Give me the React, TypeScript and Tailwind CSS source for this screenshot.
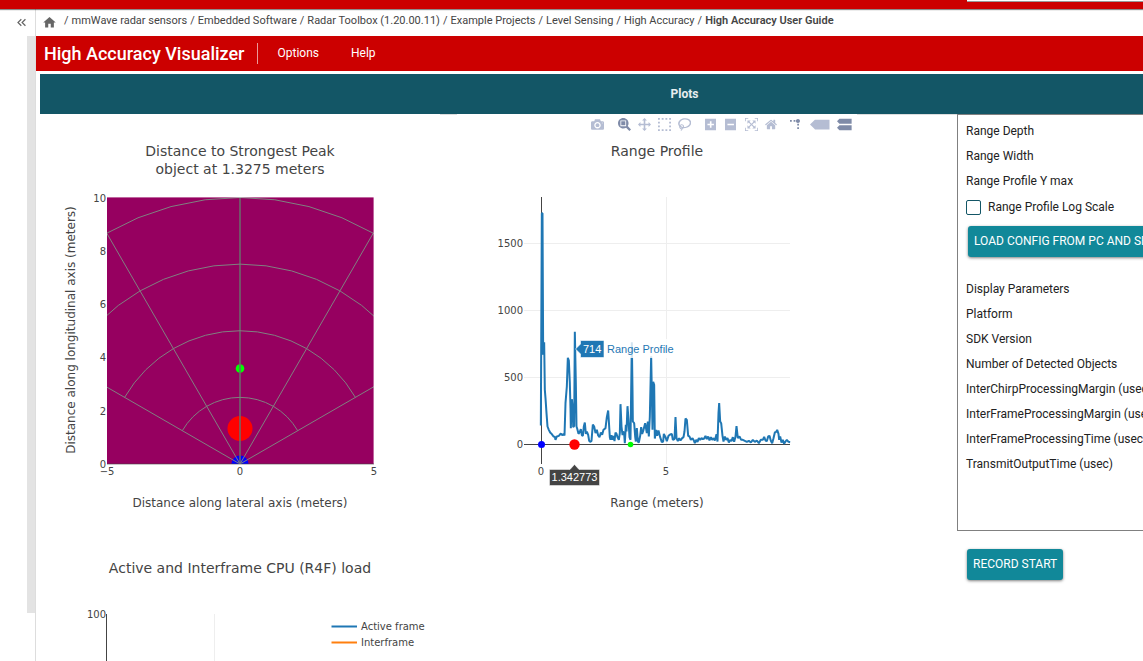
import React from "react";
import { MdHome, MdKeyboardDoubleArrowLeft } from "react-icons/md";

type Point = [number, number];

const PLOT_FONT = "Verdana, 'DejaVu Sans', sans-serif";
const HOVER_FONT = "Arial, 'Liberation Sans', sans-serif";
const INK = "#444";

const trail = [
  "mmWave radar sensors",
  "Embedded Software",
  "Radar Toolbox (1.20.00.11)",
  "Example Projects",
  "Level Sensing",
  "High Accuracy",
];

const rangeSettings = ["Range Depth", "Range Width", "Range Profile Y max"];

const displayParameters = [
  "Display Parameters",
  "Platform",
  "SDK Version",
  "Number of Detected Objects",
  "InterChirpProcessingMargin (usec)",
  "InterFrameProcessingMargin (usec)",
  "InterFrameProcessingTime (usec)",
  "TransmitOutputTime (usec)",
];

type Tool = { name: string; width: number; d: string; active?: boolean; transform?: string };

const toolGroups: Tool[][] = [
  [
    {
      name: "Download plot as a png",
      width: 1000,
      d: "m500 450c-83 0-150-67-150-150 0-83 67-150 150-150 83 0 150 67 150 150 0 83-67 150-150 150z m400 150h-120c-16 0-34 13-39 29l-31 93c-6 15-23 28-40 28h-340c-16 0-34-13-39-28l-31-94c-6-15-23-28-40-28h-120c-55 0-100-45-100-100v-450c0-55 45-100 100-100h800c55 0 100 45 100 100v450c0 55-45 100-100 100z m-400-550c-138 0-250 112-250 250 0 138 112 250 250 250 138 0 250-112 250-250 0-138-112-250-250-250z m365 380c-19 0-35 16-35 35 0 19 16 35 35 35 19 0 35-16 35-35 0-19-16-35-35-35z",
    },
  ],
  [
    {
      name: "Zoom",
      width: 1000,
      active: true,
      d: "m1000-25l-250 251c40 63 63 138 63 218 0 224-182 406-407 406-224 0-406-182-406-406s183-406 407-406c80 0 155 22 218 62l250-250 125 125z m-812 250l0 438 437 0 0-438-437 0z m62 375l313 0 0-312-313 0 0 312z",
    },
    {
      name: "Pan",
      width: 1000,
      d: "m1000 350l-187 188 0-125-250 0 0 250 125 0-188 187-187-187 125 0 0-250-250 0 0 125-188-188 186-187 0 125 252 0 0-250-125 0 187-188 188 188-125 0 0 250 250 0 0-126 187 188z",
    },
    {
      name: "Box Select",
      width: 1000,
      d: "m0 850l0-143 143 0 0 143-143 0z m286 0l0-143 143 0 0 143-143 0z m285 0l0-143 143 0 0 143-143 0z m286 0l0-143 143 0 0 143-143 0z m-857-286l0-143 143 0 0 143-143 0z m857 0l0-143 143 0 0 143-143 0z m-857-285l0-143 143 0 0 143-143 0z m857 0l0-143 143 0 0 143-143 0z m-857-286l0-143 143 0 0 143-143 0z m286 0l0-143 143 0 0 143-143 0z m285 0l0-143 143 0 0 143-143 0z m286 0l0-143 143 0 0 143-143 0z",
    },
    {
      name: "Lasso Select",
      width: 1031,
      d: "m1018 538c-36 207-290 336-568 286-277-48-473-256-436-463 10-57 36-108 76-151-13-66 11-137 68-183 34-28 75-41 114-42l-55-70 0 0c-2-1-3-2-4-3-10-14-8-34 5-45 14-11 34-8 45 4 1 1 2 3 2 5l0 0 113 140c16 11 31 24 45 40 4 3 6 7 8 11 48-3 100 0 151 9 278 48 473 255 436 462z m-624-379c-80 14-149 48-197 96 42 42 109 47 156 9 33-26 47-66 41-105z m-187-74c-19 16-33 37-39 60 50-32 109-55 174-68-42-25-95-24-135 8z m360 75c-34-7-69-9-102-8 8 62-16 128-68 170-73 59-175 54-244-5-9 20-16 40-20 61-28 159 121 317 333 354s407-60 434-217c28-159-121-318-333-355z",
    },
  ],
  [
    {
      name: "Zoom in",
      width: 875,
      d: "m1 787l0-875 875 0 0 875-875 0z m687-500l-187 0 0-187-125 0 0 187-188 0 0 125 188 0 0 187 125 0 0-187 187 0 0-125z",
    },
    {
      name: "Zoom out",
      width: 875,
      d: "m0 788l0-876 875 0 0 876-875 0z m688-500l-500 0 0 125 500 0 0-125z",
    },
    {
      name: "Autoscale",
      width: 1000,
      d: "m250 850l-187 0-63 0 0-62 0-188 63 0 0 188 187 0 0 62z m688 0l-188 0 0-62 188 0 0-188 62 0 0 188 0 62-62 0z m-875-938l0 188-63 0 0-188 0-62 63 0 187 0 0 62-187 0z m875 188l0-188-188 0 0-62 188 0 62 0 0 62 0 188-62 0z m-125 188l-1 0-93-94-156 156 156 156 92-93 2 0 0 250-250 0 0-2 93-92-156-156-156 156 94 92 0 2-250 0 0-250 0 0 93 93 157-156-157-156-93 94 0 0 0-250 250 0 0 0-94 93 156 157 156-157-93-93 0 0 250 0 0 250z",
    },
    {
      name: "Reset axes",
      width: 929,
      d: "m786 296v-267q0-15-11-26t-25-10h-214v214h-143v-214h-214q-15 0-25 10t-11 26v267q0 1 0 2t0 2l321 264 321-264q1-1 1-4z m124 39l-34-41q-5-5-12-6h-2q-7 0-12 3l-386 322-386-322q-7-4-13-4-7 2-12 7l-35 41q-4 5-3 13t6 12l401 334q18 15 42 15t43-15l136-114v109q0 8 5 13t13 5h107q8 0 13-5t5-13v-227l122-102q5-5 6-12t-4-13z",
    },
  ],
  [
    {
      name: "Toggle Spike Lines",
      width: 1000,
      active: true,
      transform: "matrix(1.5 0 0 -1.5 0 850)",
      d: "M512 409c0-57-46-104-103-104-57 0-104 47-104 104 0 57 47 103 104 103 57 0 103-46 103-103z m-327-39l92 0 0 92-92 0z m-185 0l92 0 0 92-92 0z m370-186l92 0 0 93-92 0z m0-184l92 0 0 92-92 0z",
    },
    {
      name: "Show closest data on hover",
      width: 1500,
      d: "m375 725l0 0-375-375 375-374 0-1 1125 0 0 750-1125 0z",
    },
    {
      name: "Compare data on hover",
      width: 1125,
      active: true,
      d: "m187 786l0 2-187-188 188-187 0 0 937 0 0 373-938 0z m0-499l0 1-187-188 188-188 0 0 937 0 0 376-938-1z",
    },
  ],
];

const groupOffset = ["", "ml-[7px]", "ml-[7px]", "ml-[5px]"];

function ModeBar() {
  return (
    <div className="absolute top-1 left-[134px] flex" role="toolbar" aria-label="Plot tools">
      {toolGroups.map((group, i) => (
        <div key={i} className={`flex ${groupOffset[i]}`}>
          {group.map((tool) => (
            <button
              key={tool.name}
              type="button"
              aria-label={tool.name}
              className={`flex h-[13px] ${tool.width === 1500 ? "w-[27px]" : "w-5"} ${
                tool.active ? "text-[#7f8ba8]" : "text-[#b5bdd3]"
              }`}
            >
              <svg viewBox={`0 0 ${tool.width} 1000`} className="h-[13px] w-auto" fill="currentColor">
                <path transform={tool.transform ?? "matrix(1 0 0 -1 0 850)"} d={tool.d} />
              </svg>
            </button>
          ))}
        </div>
      ))}
    </div>
  );
}

/* Field-of-view chart: 26.65 px per meter, origin at the bottom centre. */
const FOV = { cx: 200, cy: 350, scale: 26.65 };

function polar(r: number, deg: number): Point {
  const a = (deg * Math.PI) / 180;
  return [FOV.cx + r * FOV.scale * Math.sin(a), FOV.cy - r * FOV.scale * Math.cos(a)];
}

function arc(r: number) {
  const pts: string[] = [];
  for (let deg = -60; deg <= 60; deg += 7.5) pts.push(polar(r, deg).join(","));
  return pts.join(" ");
}

function PeakPlot() {
  return (
    <svg viewBox="0 0 400 417" className="h-[417px] w-[400px] bg-white" fontFamily={PLOT_FONT} fill={INK}>
      <title>Distance to Strongest Peak</title>
      <g fontSize="14" textAnchor="middle">
        <text x="200" y="42">Distance to Strongest Peak</text>
        <text x="200" y="60">object at 1.3275 meters</text>
      </g>
      <clipPath id="fov">
        <rect x="67" y="83" width="267" height="267" />
      </clipPath>
      <g clipPath="url(#fov)">
        <rect x="67" y="83" width="267" height="267" fill="#960060" />
        <circle cx="200" cy="350" r="8.5" fill="#00f" />
        <circle cx="200" cy="314.5" r="12.5" fill="#f00" />
        <circle cx="200" cy="254.5" r="4.3" fill="#0f0" />
        <path d="M200 83V350" stroke="#444" strokeOpacity="0.55" strokeWidth="2" />
        <g fill="none" stroke="#808080" strokeWidth="1">
          {[2.5, 5, 7.5, 10].map((r) => (
            <polyline key={r} points={arc(r)} />
          ))}
          {[-60, -30, 0, 30, 60].map((deg) => {
            const [x, y] = polar(10, deg);
            return <line key={deg} x1={FOV.cx} y1={FOV.cy} x2={x} y2={y} />;
          })}
        </g>
      </g>
      <path d="M66.5 83V350M333.500 83V350M67 83.5H334" stroke="#fff" strokeOpacity="0.4" fill="none" />
      <path d="M67 350H334" stroke="#444" strokeOpacity="0.6" />
      <g fontSize="10" textAnchor="end">
        {[0, 2, 4, 6, 8, 10].map((v) => (
          <text key={v} x="66" y={354 - v * 26.65}>{v}</text>
        ))}
      </g>
      <g fontSize="10" textAnchor="middle">
        <text x="67" y="361">−5</text>
        <text x="200" y="361">0</text>
        <text x="334" y="361">5</text>
      </g>
      <g fontSize="12" textAnchor="middle">
        <text x="200" y="393">Distance along lateral axis (meters)</text>
        <text transform="translate(35 216) rotate(-90)">Distance along longitudinal axis (meters)</text>
      </g>
    </svg>
  );
}

/* Range profile samples, in thirds of a pixel from the chart's zero point. */
const profile: Point[] = [
  [-2, 57], [1, 694], [3, 694], [5, 269], [8, 307], [10, 164], [12, 139], [15, 94], [18, 54], [22, 44], [26, 36],
  [31, 31], [36, 24], [40, 23], [42, 14], [46, 24], [52, 26], [58, 33], [62, 28], [66, 31], [69, 27],
  [72, 124], [76, 174], [79, 260], [82, 252], [85, 184], [87, 109], [88, 49], [91, 136], [94, 104],
  [95, 52], [98, 56], [100, 338], [103, 184], [105, 54], [107, 48], [111, 32], [114, 36], [118, 46],
  [121, 28], [124, 26], [127, 54], [130, 66], [133, 32], [136, 39], [140, 29], [143, 11], [146, 8],
  [150, 11], [154, 60], [158, 54], [162, 34], [166, 44], [170, 27], [174, 22], [178, 36], [182, 29],
  [186, 44], [192, 49], [196, 82], [200, 102], [203, 54], [205, 22], [207, 14], [210, 28], [213, 14],
  [216, 26], [219, 10], [222, 36], [225, 32], [228, 22], [232, 14], [235, 34], [237, 121], [240, 54],
  [243, 28], [245, 39], [248, 32], [250, 4], [253, 59], [255, 39], [258, 115], [261, 74], [264, 22],
  [267, 14], [271, 307], [273, 164], [274, 69], [278, 64], [281, 24], [283, 9], [286, 49], [289, 9],
  [292, 6], [296, 26], [299, 52], [302, 32], [306, 44], [311, 64], [316, 34], [319, 69], [322, 24],
  [325, 84], [329, 265], [333, 44], [335, 188], [338, 179], [340, 18], [344, 44], [347, 26], [351, 42],
  [356, 22], [361, 7], [365, 9], [367, 32], [372, 22], [376, 10], [381, 26], [386, 30], [391, 32],
  [394, 14], [399, 16], [402, 82], [405, 19], [409, 10], [413, 19], [417, 12], [422, 19], [426, 22],
  [429, 39], [432, 78], [436, 74], [440, 26], [444, 24], [448, 14], [453, 19], [457, 12], [460, 4],
  [464, 14], [468, 8], [472, 19], [476, 14], [480, 19], [484, 16], [488, 18], [492, 26], [496, 16],
  [500, 24], [504, 12], [508, 22], [512, 14], [516, 19], [520, 12], [525, 31], [528, 9], [531, 94],
  [533, 124], [536, 69], [539, 64], [543, 26], [546, 9], [550, 24], [554, 14], [558, 19], [562, 6],
  [566, 14], [570, 10], [574, 22], [578, 8], [582, 24], [585, 55], [589, 19], [594, 24], [599, 14],
  [604, 14], [610, 11], [616, 8], [622, 11], [628, 6], [634, 14], [640, 8], [646, 12], [652, 4],
  [658, 14], [664, 14], [668, 23], [672, 12], [676, 10], [680, 24], [684, 26], [688, 11], [692, 4],
  [696, 19], [700, 36], [704, 38], [707, 44], [711, 32], [713, 14], [716, 24], [720, 6], [724, 14],
  [728, 2], [732, 9], [736, 14], [741, 8], [746, 7],
];

const profilePoints = profile.map(([x, y]) => `${84.5 + x / 3},${330.5 - y / 3}`).join(" ");

function RangePlot() {
  return (
    <div className="relative">
      <svg viewBox="0 0 400 417" className="h-[417px] w-[400px] bg-white" fontFamily={PLOT_FONT} fill={INK}>
        <title>Range Profile</title>
        <text x="200" y="42" fontSize="14" textAnchor="middle">Range Profile</text>
        <path d="M67 129.500H333M67 196.500H333M67 263.500H333M209.500 83V350" stroke="#eee" fill="none" />
        <path d="M67 330.500H333M84.500 83V350" stroke={INK} fill="none" />
        <polyline points={profilePoints} fill="none" stroke="#1f77b4" strokeWidth="2" strokeLinejoin="bevel" />
        <circle cx="84.500" cy="330.500" r="3.500" fill="#00f" />
        <circle cx="117.500" cy="330.500" r="5.200" fill="#f00" />
        <circle cx="173.500" cy="330.500" r="2.800" fill="#0f0" />
        <g fontSize="10" textAnchor="end">
          <text x="66" y="133">1500</text>
          <text x="66" y="200">1000</text>
          <text x="66" y="267">500</text>
          <text x="66" y="334">0</text>
        </g>
        <g fontSize="10" textAnchor="middle">
          <text x="84" y="361">0</text>
          <text x="209" y="361">5</text>
        </g>
        <text x="200" y="393" fontSize="12" textAnchor="middle">Range (meters)</text>
        <g fontFamily={HOVER_FONT} fontSize="11">
          <rect x="147" y="225" width="70" height="19" fill="#fff" fillOpacity="0.8" />
          <path d="M118.500 235L123.500 230V226.500H147V243.500H123.500V240Z" fill="#1f77b4" stroke="#fff" strokeOpacity="0.6" />
          <text x="126" y="239" fill="#fff">714</text>
          <text x="150" y="239" fill="#1f77b4">Range Profile</text>
          <path d="M117.500 350.500L122 355.500H142.500V371.500H92.500V355.500H113Z" fill="#444" stroke="#fff" strokeOpacity="0.5" />
          <text x="117.500" y="367" fill="#fff" textAnchor="middle">1.342773</text>
        </g>
      </svg>
      <ModeBar />
    </div>
  );
}

function LoadPlot() {
  return (
    <svg viewBox="0 0 400 417" className="h-[417px] w-[400px] bg-white" fontFamily={PLOT_FONT} fill={INK}>
      <title>Active and Interframe CPU (R4F) load</title>
      <text x="200" y="42" fontSize="14" textAnchor="middle">Active and Interframe CPU (R4F) load</text>
      <path d="M174.500 83V350" stroke="#eee" />
      <path d="M66.500 83V350" stroke={INK} />
      <text x="66" y="87" fontSize="10" textAnchor="end">100</text>
      <path d="M291.500 95.500H317" stroke="#1f77b4" strokeWidth="2" />
      <path d="M291.500 111.500H317" stroke="#ff7f0e" strokeWidth="2" />
      <g fontSize="10">
        <text x="321" y="99">Active frame</text>
        <text x="321" y="115">Interframe</text>
      </g>
    </svg>
  );
}

const raised =
  "h-[31px] rounded-[3px] bg-[#118899] pb-[2px] text-xs whitespace-nowrap text-white uppercase shadow-[0_1px_3px_rgba(0,0,0,0.5)]";

function SettingsPanel() {
  return (
    <aside className="flex-1 text-xs text-[#222]">
      <div className="h-[417px] border border-[#808080] pt-1 pl-2 whitespace-nowrap">
        {rangeSettings.map((label) => (
          <p key={label} className="h-[25px] leading-[25px]">{label}</p>
        ))}
        <label className="flex h-[26px] items-center gap-[7px]">
          <input
            type="checkbox"
            className="h-[15px] w-[15px] appearance-none rounded-[2px] border border-[#135666] bg-white checked:bg-[#118899]"
          />
          Range Profile Log Scale
        </label>
        <button type="button" className={`mt-[6px] ml-[2px] block px-[6px] ${raised}`}>
          Load config from PC and send
        </button>
        <div className="mt-5">
          {displayParameters.map((label) => (
            <p key={label} className="h-[25px] leading-[25px]">{label}</p>
          ))}
        </div>
      </div>
      <button type="button" className={`mt-[18px] ml-[10px] block px-[6px] ${raised}`}>
        Record start
      </button>
    </aside>
  );
}

export default function App() {
  return (
    <div className="flex h-screen flex-col overflow-hidden bg-white font-[Roboto,sans-serif] text-[#444]">
      <div className="z-10 flex h-[9px] shrink-0 justify-end bg-[#cc0000] shadow-[0_1px_1px_rgba(0,0,0,0.45)]">
        <div className="h-[2px] w-44 border-b border-[#999] bg-white" />
      </div>
      <div className="flex min-h-0 flex-1">
        <nav className="flex w-9 shrink-0 flex-col border-r border-[#ddd]" aria-label="Contents">
          <button type="button" aria-label="Collapse contents" className="flex h-[27px] items-center pl-[14px]">
            <MdKeyboardDoubleArrowLeft className="h-[15px] w-[15px] text-[#666]" />
          </button>
          <div className="mb-12 w-2 flex-1 self-end bg-[#e3e3e3]" />
        </nav>
        <main className="min-w-0 flex-1 overflow-hidden">
          <nav className="flex h-[27px] items-center pl-[6px] text-[11px] whitespace-nowrap" aria-label="Breadcrumb">
            <a href="#home" aria-label="Home">
              <MdHome className="h-[15px] w-[15px] text-[#666]" />
            </a>
            <ol className="flex pb-[2px] pl-[7px]">
              {trail.map((item) => (
                <li key={item}>
                  <span className="pr-[3px]">/</span>
                  <a href="#trail" className="pr-[3px]">{item}</a>
                </li>
              ))}
              <li>
                <span className="pr-[3px]">/</span>
                <a href="#guide" aria-current="page" className="font-semibold">High Accuracy User Guide</a>
              </li>
            </ol>
          </nav>
          <header className="flex h-[35px] items-center bg-[#cc0000] pl-2 text-white">
            <h1 className="text-lg font-medium">High Accuracy Visualizer</h1>
            <div className="mx-3 h-[21px] w-px bg-white/60" />
            <div className="flex gap-6 pb-[2px] pl-1 text-xs">
              <button type="button" className="px-1">Options</button>
              <button type="button" className="px-1">Help</button>
            </div>
          </header>
          <div className="min-w-[1293px] pt-[3px] pl-1">
            <h2 className="flex h-10 items-center justify-center bg-[#135666] text-xs font-bold text-white/90">
              Plots
            </h2>
            <div className="flex border-t border-[#ddd]">
              <section className="-mt-px grid shrink-0 grid-cols-[417px_500px]">
                <PeakPlot />
                <RangePlot />
                <LoadPlot />
              </section>
              <div className="-mt-px flex flex-1">
                <SettingsPanel />
              </div>
            </div>
          </div>
        </main>
      </div>
    </div>
  );
}
